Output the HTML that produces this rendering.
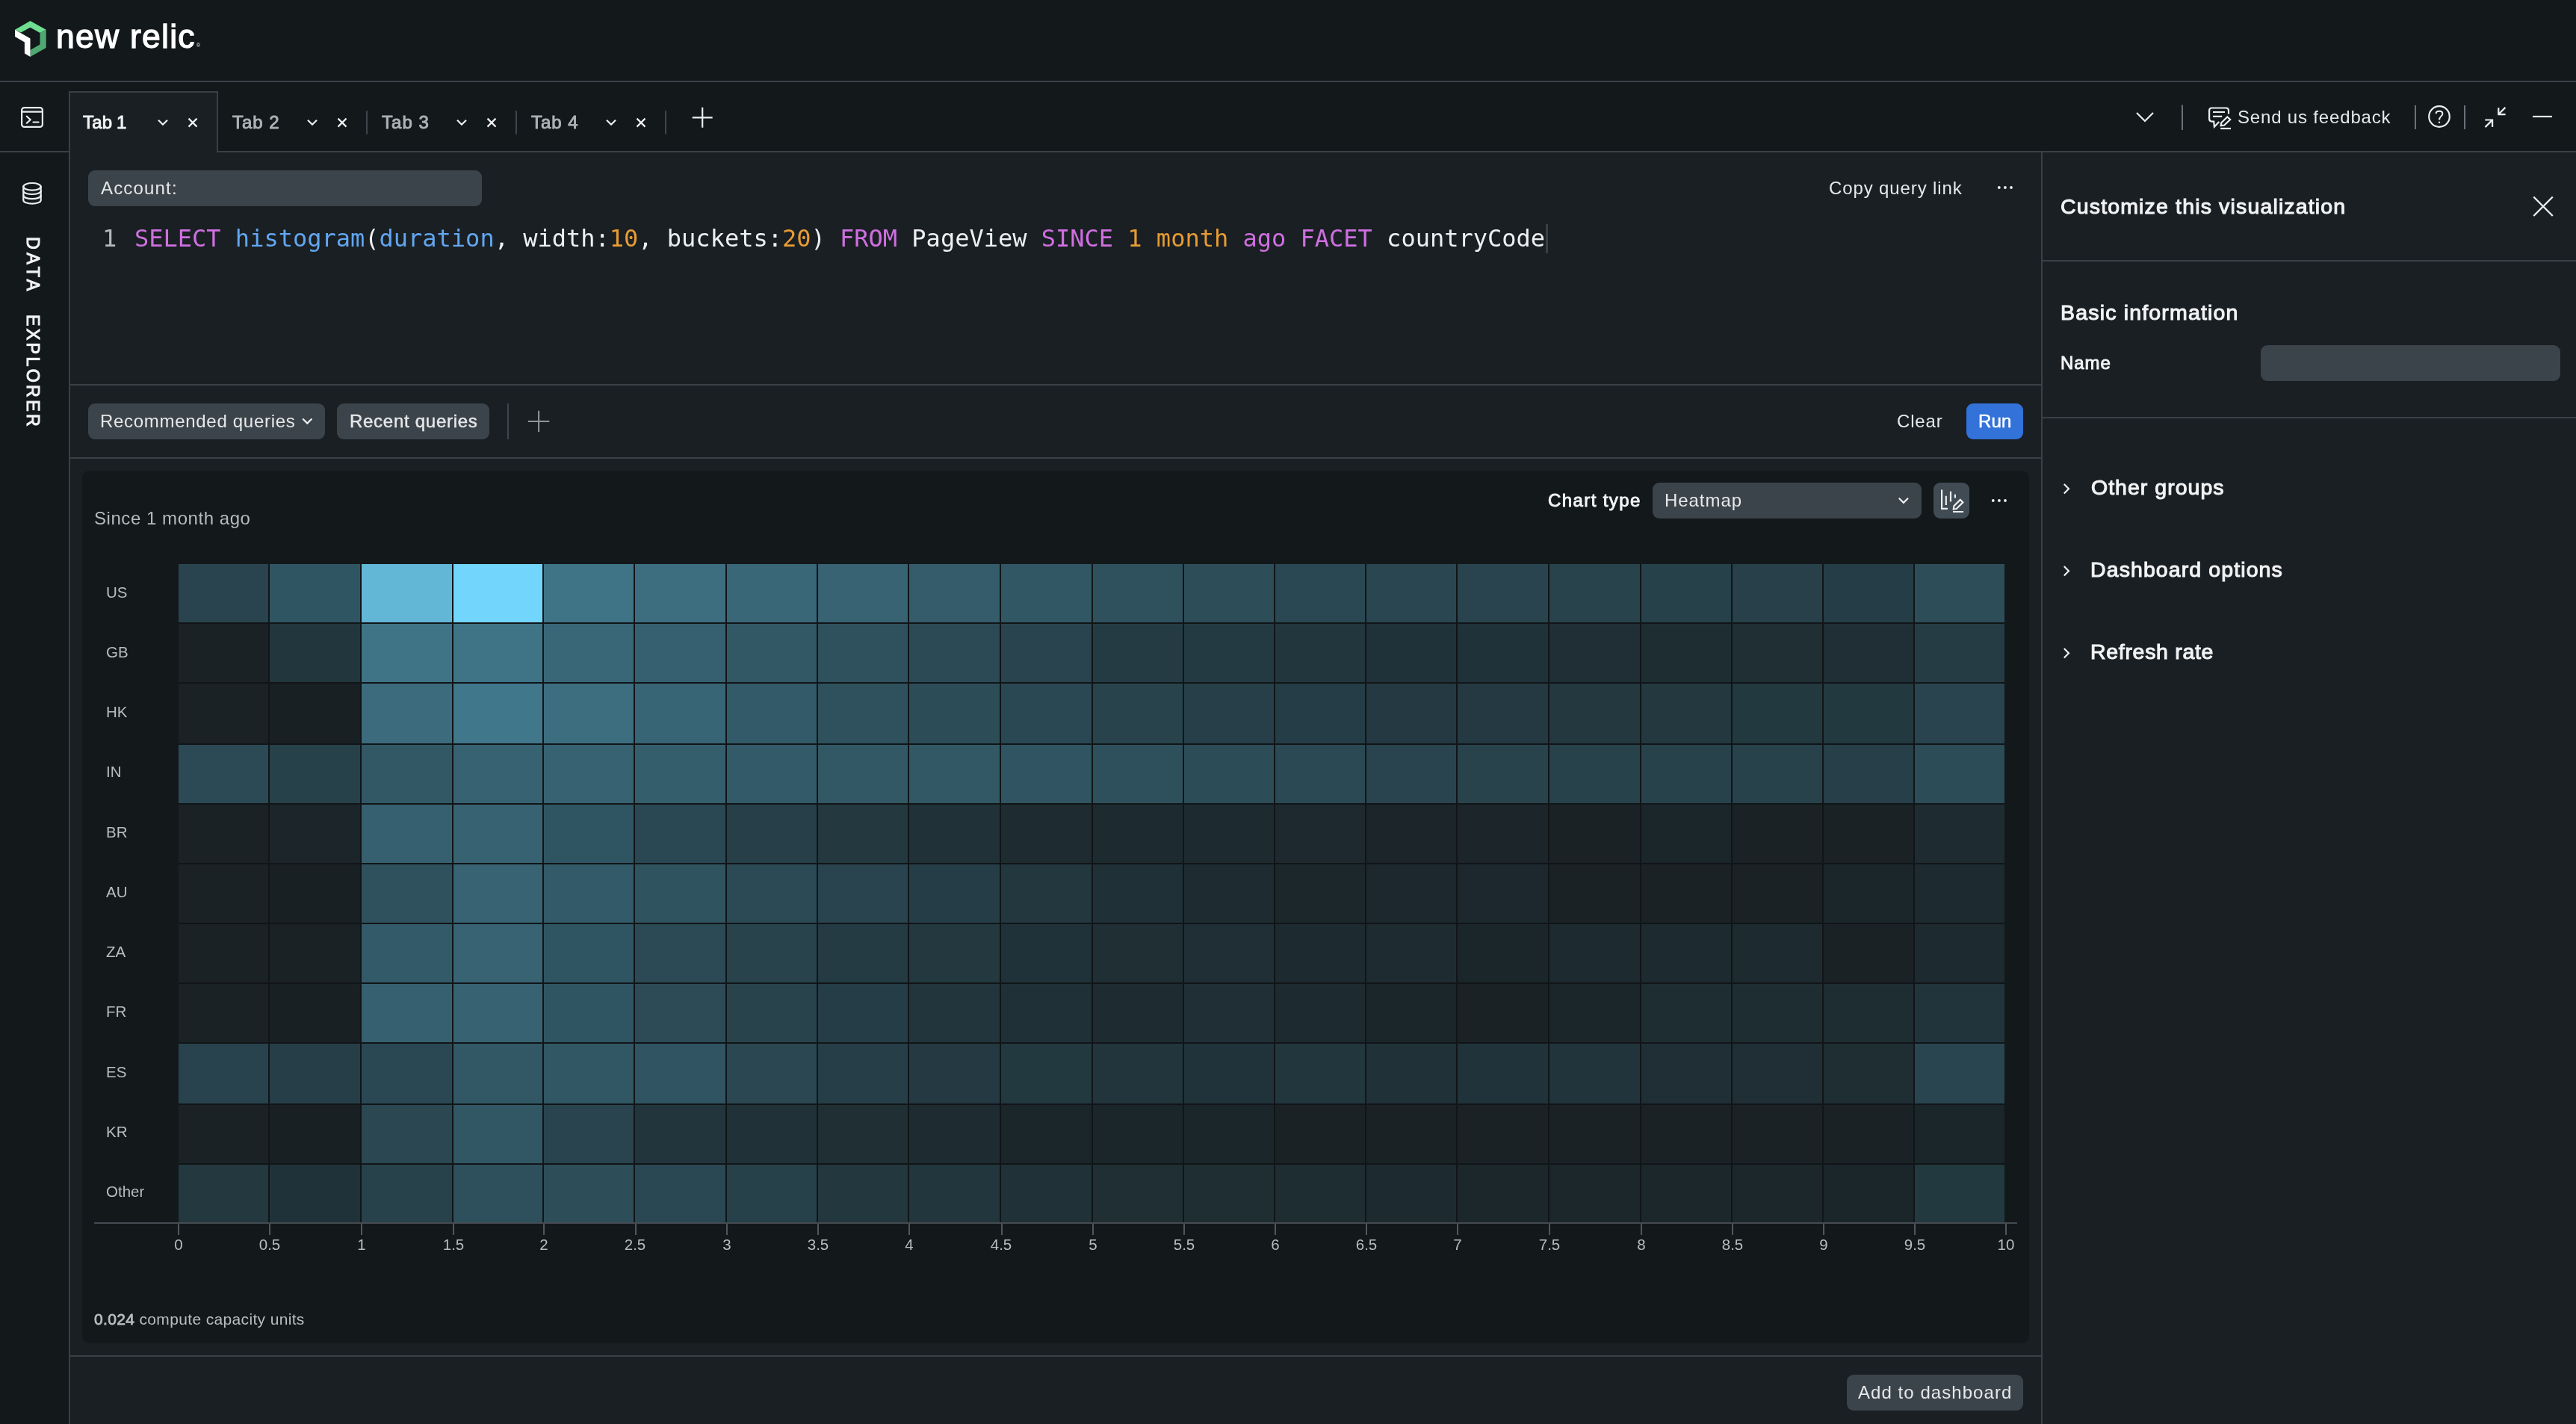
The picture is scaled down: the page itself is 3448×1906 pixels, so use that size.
<!DOCTYPE html>
<html lang="en"><head><meta charset="utf-8"><title>New Relic - Query your data</title>
<style>
*{box-sizing:border-box;margin:0;padding:0}
html,body{width:3448px;height:1906px;overflow:hidden;background:#1a1f23}
body{position:relative;font-family:"Liberation Sans",sans-serif;color:#e6e8e9;font-size:24px}
.a{position:absolute}
.t,.yl,.xl{will-change:transform}
.t{position:absolute;white-space:nowrap;line-height:40px;height:40px;font-size:24px}
.hl{position:absolute;height:2px;background:#394046}
.vl{position:absolute;width:2px;background:#394046}
.box{position:absolute;height:48px;border-radius:9px;background:#3c444b}
.mono{font-family:"DejaVu Sans Mono","Liberation Mono",monospace}
svg{position:absolute;overflow:visible}
.ic{fill:none;stroke:#eceeef;stroke-width:2.2;stroke-linecap:butt;stroke-linejoin:miter}
.rc{stroke-linecap:round;stroke-linejoin:round}
.yl{position:absolute;left:142.4px;font-size:20.5px;line-height:32px;height:32px;color:#b9bdbf;white-space:nowrap}
.xl{position:absolute;top:1650px;width:80px;text-align:center;font-size:20.5px;line-height:32px;color:#b9bdbf}
.tick{position:absolute;top:1638px;width:2px;height:15px;background:#50565c}
.kw{color:#cf6fe1}.fn{color:#62a6f0}.nm{color:#e69c33}
.tab{color:#aeb3b7;-webkit-text-stroke:0.9px}
.h{font-size:28.5px;-webkit-text-stroke:1.05px;color:#f2f3f4}
</style></head><body>

<!-- top header -->
<div class="a" style="left:0;top:0;width:3448px;height:108px;background:#13181b"></div>
<div class="hl" style="left:0;top:108px;width:3448px"></div>
<svg style="left:0;top:0" width="80" height="100" viewBox="0 0 80 100">
  <path d="M40.5 28 L61.7 39.8 L53.5 43.9 L40.5 36.8 L28 43.6 L20 39.8 Z" fill="#6fde93"/>
  <path d="M61.700 39.800 L61.700 63.900 L40.500 75.900 L40.500 66.900 L53.500 59.600 L53.500 43.900 Z" fill="#4fa871"/>
  <path d="M20 39.800 L40.500 51.600 L40.500 75.900 L32.900 71.600 L32.900 56.500 L20 49 Z" fill="#ffffff"/>
</svg>
<div class="t" id="brand" style="top:21px;font-size:44.5px;line-height:56px;height:56px;color:#fff;-webkit-text-stroke:1.3px #fff;left:75.40px;letter-spacing:1.250px">new relic</div>
<div class="t" id="reg" style="left:262.5px;top:56px;font-size:7px;line-height:10px;height:10px;color:#e6e8e9">®</div>

<!-- tab bar -->
<div class="a" style="left:0;top:110px;width:3448px;height:93px;background:#13181b"></div>
<div class="hl" style="left:0;top:202px;width:3448px"></div>
<!-- sidebar -->
<div class="a" style="left:0;top:204px;width:93px;height:1702px;background:#13181b"></div>
<div class="vl" style="left:92px;top:204px;height:1702px"></div>
<!-- active tab -->
<div class="a" style="left:92px;top:122px;width:200px;height:82px;background:#1a1f23;border:2px solid #394046;border-bottom:none"></div>

<svg style="left:0;top:0" width="93" height="300" viewBox="0 0 93 300">
 <g class="ic rc">
  <rect x="29.100" y="144.100" width="27.800" height="25.800" rx="3.500"/><path d="M29.100 149.700 H56.900"/><path d="M35.800 155.700 L40.800 160.200 L35.800 164.700 M44.500 163.500 H51.600"/>
  <ellipse cx="43" cy="249.800" rx="11.700" ry="4.800"/>
  <path d="M31.300 249.800 V267.900 C31.300 270.600 36.500 272.700 43 272.700 C49.500 272.700 54.700 270.600 54.700 267.900 V249.800"/>
  <path d="M31.300 255.400 C31.300 258 36.500 260 43 260 C49.500 260 54.700 258 54.700 255.400 M31.300 261.600 C31.300 264.200 36.500 266.200 43 266.200 C49.500 266.200 54.700 264.200 54.700 261.600"/>
 </g>
</svg>

<div class="t tab" id="tab1" style="top:144.2px;color:#f2f3f4;left:110.6px;word-spacing:-1.2px;letter-spacing:0.2px">Tab 1</div>
<div class="t tab" id="tab2" style="top:144.2px;left:311.00px;letter-spacing:1.000px">Tab 2</div>
<div class="t tab" id="tab3" style="top:144.2px;left:511.00px;letter-spacing:1.050px">Tab 3</div>
<div class="t tab" id="tab4" style="top:144.2px;left:711.00px;letter-spacing:1.000px">Tab 4</div>
<svg style="left:0;top:0" width="1000" height="204" viewBox="0 0 1000 204">
 <g class="ic" stroke-width="2.100">
  <path d="M212 160.800 L218 166.800 L224 160.800 M252.500 158.600 L263.500 169.600 M263.500 158.600 L252.500 169.600"/>
  <path d="M412 160.800 L418 166.800 L424 160.800 M452.500 158.600 L463.500 169.600 M463.500 158.600 L452.500 169.600"/>
  <path d="M612 160.800 L618 166.800 L624 160.800 M652.500 158.600 L663.500 169.600 M663.500 158.600 L652.500 169.600"/>
  <path d="M812 160.800 L818 166.800 L824 160.800 M852.500 158.600 L863.500 169.600 M863.500 158.600 L852.500 169.600"/>
  <path d="M926.700 157.300 H953.700 M940.200 143.800 V170.800" stroke-width="2.200"/>
 </g>
 <g stroke="#3f454c" stroke-width="2"><path d="M491 148.300 V179.700 M691 148.300 V179.700 M891 148.300 V179.700"/></g>
</svg>

<!-- tab bar right -->
<svg style="left:2840px;top:109px" width="608" height="94" viewBox="2840 109 608 94">
 <g class="ic">
  <path d="M2860 151 L2871 162 L2882 151"/>
  <path d="M3390 156 H3416"/>
  <circle cx="3265" cy="156" r="13.800"/>
  <path d="M3260.600 152.200 C3260.600 147.600 3269.400 147.600 3269.400 152.200 C3269.400 155.500 3265 155.500 3265 160.600" stroke-width="2"/>
  <path d="M3265 162.700 V165" stroke-width="2.200"/>
  <path d="M3353.400 143.900 L3344.300 153 M3344.300 144.200 V153.100 H3353.600 M3326.500 170.100 L3336 160.600 M3326.300 160.500 H3336.100 V170"/>
  <path d="M2983 152.600 V148 C2983 146 2981.500 144.500 2979.500 144.500 H2960.600 C2958.600 144.500 2957.100 146 2957.100 148 V159.100 C2957.100 161.100 2958.600 162.600 2960.600 162.600 H2963.200 L2963.900 169.800 L2970.300 163"/>
  <path d="M2962 150 H2978 M2962 155.900 H2974.200"/>
  <path d="M2973.300 164.300 L2981.300 156.400 L2985.200 160 L2977.300 167.500 L2972.600 168.200 Z"/>
  <path d="M2972.200 172 H2986"/>
 </g>
 <g stroke="#6b7177" stroke-width="2"><path d="M2921 140.500 V174 M3233 141 V173 M3299 141 V173"/></g>
</svg>
<div class="t" id="fb" style="top:136.8px;left:2994.60px;letter-spacing:0.828px">Send us feedback</div>

<!-- sidebar content -->
<div class="t" id="dex1" style="left:43.8px;top:316px;font-size:23.2px;-webkit-text-stroke:1.05px;transform-origin:0 0;transform:rotate(90deg) translateY(-50%);line-height:30px;height:30px;color:#f2f3f4;top:316.70px;letter-spacing:4.601px">DATA</div>
<div class="t" id="dex2" style="left:43.8px;top:421px;font-size:23.2px;-webkit-text-stroke:1.05px;transform-origin:0 0;transform:rotate(90deg) translateY(-50%);line-height:30px;height:30px;color:#f2f3f4;top:420.90px;letter-spacing:3.344px">EXPLORER</div>

<!-- query editor -->
<div class="box" style="left:118px;top:228px;width:527px"></div>
<div class="t" id="acct" style="top:232px;left:135.20px;letter-spacing:1.170px">Account:</div>
<div class="t" id="cql" style="top:232px;left:2448.30px;letter-spacing:0.884px">Copy query link</div>
<svg style="left:2668px;top:221px" width="40" height="60" viewBox="2660 640 40 60"><g fill="#eceeef"><circle cx="2667.800" cy="670" r="1.900"/><circle cx="2675.900" cy="670" r="1.900"/><circle cx="2684" cy="670" r="1.900"/></g></svg>

<div class="t mono" style="left:137px;top:299px;font-size:32px;color:#b4b8ba">1</div>
<div class="t mono" id="q" style="left:180px;top:299px;font-size:32px;color:#eeeff0"><span class="kw">SELECT</span> <span class="fn">histogram</span>(<span class="fn">duration</span>, width:<span class="nm">10</span>, buckets:<span class="nm">20</span>) <span class="kw">FROM</span> PageView <span class="kw">SINCE</span> <span class="nm">1 month</span> <span class="kw">ago</span> <span class="kw">FACET</span> countryCode</div>
<div class="a" style="left:2069px;top:300px;width:3px;height:39px;background:#3a3f44"></div>

<div class="hl" style="left:94px;top:514px;width:2638px"></div>
<div class="box" style="left:118px;top:540px;width:317px"></div>
<div class="t" id="rq" style="top:544px;left:134.00px;letter-spacing:0.699px">Recommended queries</div>
<svg style="left:402px;top:558px" width="18" height="12"><path class="ic" d="M3.200 2.500 L9.300 8.600 L15.400 2.500"/></svg>
<div class="box" style="left:451px;top:540px;width:204px"></div>
<div class="t" id="rc" style="top:544px;-webkit-text-stroke:0.45px;left:468.30px;letter-spacing:0.722px">Recent queries</div>
<div class="vl" style="left:679px;top:540px;height:48px;background:#3f454c"></div>
<svg style="left:706px;top:549px" width="30" height="30"><path d="M1 15 H29.300 M15.100 0.700 V29" stroke="#92979c" stroke-width="2" fill="none"/></svg>
<div class="t" id="clr" style="top:544px;left:2538.50px;letter-spacing:0.850px">Clear</div>
<div class="box" style="left:2632px;top:540px;width:76px;background:#3272d9"></div>
<div class="t" id="run" style="top:544px;color:#fff;-webkit-text-stroke:0.5px;left:2648.00px;letter-spacing:0.150px">Run</div>
<div class="hl" style="left:94px;top:612px;width:2638px"></div>

<!-- chart card -->
<div class="a" style="left:110px;top:630px;width:2606px;height:1168px;border-radius:10px;background:#13181b"></div>
<div class="t" id="since" style="top:674px;color:#b6babd;left:126.10px;letter-spacing:0.549px">Since 1 month ago</div>
<div class="t" id="ct" style="top:650px;-webkit-text-stroke:0.9px;color:#f2f3f4;left:2072.40px;letter-spacing:1.402px">Chart type</div>
<div class="box" style="left:2212px;top:646px;width:360px"></div>
<div class="t" id="hm" style="top:650px;left:2227.80px;letter-spacing:0.949px">Heatmap</div>
<svg style="left:2538px;top:662px" width="20" height="16" viewBox="2538 662 20 16"><path class="ic" d="M2541.800 666.800 L2547.900 672.900 L2554 666.800"/></svg>
<div class="box" style="left:2588px;top:646px;width:48px;background:#414b53"></div>
<svg style="left:2588px;top:646px" width="48" height="48" viewBox="2588 646 48 48"><g class="ic"><path d="M2599.100 655.600 V680.800 H2607"/><path d="M2604.800 663.700 V676.100 M2611 657.800 V671.500 M2616.900 661.800 V666.400"/><path d="M2615.400 677.300 L2623.800 668.900 L2627.400 672.400 L2618.700 681 L2614.800 681.400 Z M2614 685 H2628.100"/></g></svg>

<svg style="left:2660px;top:640px" width="40" height="60" viewBox="2660 640 40 60"><g fill="#eceeef"><circle cx="2667.800" cy="670" r="1.900"/><circle cx="2675.900" cy="670" r="1.900"/><circle cx="2684" cy="670" r="1.900"/></g></svg>
<svg style="left:0;top:0" width="2733" height="1700" viewBox="0 0 2733 1700">
<rect x="239" y="755" width="2444" height="881" fill="#111518"/>
<rect x="239" y="755" width="120" height="78" fill="#29444e"/>
<rect x="361" y="755" width="121" height="78" fill="#305562"/>
<rect x="484" y="755" width="121" height="78" fill="#62b7d7"/>
<rect x="607" y="755" width="119" height="78" fill="#72d6fc"/>
<rect x="728" y="755" width="120" height="78" fill="#3f7487"/>
<rect x="850" y="755" width="121" height="78" fill="#3d6e80"/>
<rect x="973" y="755" width="120" height="78" fill="#396778"/>
<rect x="1095" y="755" width="120" height="78" fill="#376373"/>
<rect x="1217" y="755" width="121" height="78" fill="#345c6b"/>
<rect x="1340" y="755" width="121" height="78" fill="#315764"/>
<rect x="1463" y="755" width="120" height="78" fill="#2f515e"/>
<rect x="1585" y="755" width="120" height="78" fill="#2d4e59"/>
<rect x="1707" y="755" width="120" height="78" fill="#2a4853"/>
<rect x="1829" y="755" width="120" height="78" fill="#294651"/>
<rect x="1951" y="755" width="121" height="78" fill="#29444e"/>
<rect x="2074" y="755" width="121" height="78" fill="#28434c"/>
<rect x="2197" y="755" width="120" height="78" fill="#27414a"/>
<rect x="2319" y="755" width="120" height="78" fill="#274049"/>
<rect x="2441" y="755" width="120" height="78" fill="#253d46"/>
<rect x="2563" y="755" width="120" height="78" fill="#2d4e59"/>
<rect x="239" y="835" width="120" height="78" fill="#1a2225"/>
<rect x="361" y="835" width="121" height="78" fill="#22363d"/>
<rect x="484" y="835" width="121" height="78" fill="#3f7487"/>
<rect x="607" y="835" width="119" height="78" fill="#3f7487"/>
<rect x="728" y="835" width="120" height="78" fill="#396778"/>
<rect x="850" y="835" width="121" height="78" fill="#36606f"/>
<rect x="973" y="835" width="120" height="78" fill="#325866"/>
<rect x="1095" y="835" width="120" height="78" fill="#2f515e"/>
<rect x="1217" y="835" width="121" height="78" fill="#2b4a55"/>
<rect x="1340" y="835" width="121" height="78" fill="#29444e"/>
<rect x="1463" y="835" width="120" height="78" fill="#243b44"/>
<rect x="1585" y="835" width="120" height="78" fill="#243a42"/>
<rect x="1707" y="835" width="120" height="78" fill="#22363d"/>
<rect x="1829" y="835" width="120" height="78" fill="#203239"/>
<rect x="1951" y="835" width="121" height="78" fill="#203239"/>
<rect x="2074" y="835" width="121" height="78" fill="#1f2f35"/>
<rect x="2197" y="835" width="120" height="78" fill="#1e2d32"/>
<rect x="2319" y="835" width="120" height="78" fill="#1f2f34"/>
<rect x="2441" y="835" width="120" height="78" fill="#1f2f35"/>
<rect x="2563" y="835" width="120" height="78" fill="#253c45"/>
<rect x="239" y="915" width="120" height="80" fill="#1a2225"/>
<rect x="361" y="915" width="121" height="80" fill="#192023"/>
<rect x="484" y="915" width="121" height="80" fill="#3b6b7c"/>
<rect x="607" y="915" width="119" height="80" fill="#41778b"/>
<rect x="728" y="915" width="120" height="80" fill="#3d6e80"/>
<rect x="850" y="915" width="121" height="80" fill="#386575"/>
<rect x="973" y="915" width="120" height="80" fill="#335a68"/>
<rect x="1095" y="915" width="120" height="80" fill="#2f515e"/>
<rect x="1217" y="915" width="121" height="80" fill="#2c4d58"/>
<rect x="1340" y="915" width="121" height="80" fill="#2a4853"/>
<rect x="1463" y="915" width="120" height="80" fill="#28434c"/>
<rect x="1585" y="915" width="120" height="80" fill="#263f48"/>
<rect x="1707" y="915" width="120" height="80" fill="#253d46"/>
<rect x="1829" y="915" width="120" height="80" fill="#243941"/>
<rect x="1951" y="915" width="121" height="80" fill="#243941"/>
<rect x="2074" y="915" width="121" height="80" fill="#23383f"/>
<rect x="2197" y="915" width="120" height="80" fill="#23383f"/>
<rect x="2319" y="915" width="120" height="80" fill="#233940"/>
<rect x="2441" y="915" width="120" height="80" fill="#233940"/>
<rect x="2563" y="915" width="120" height="80" fill="#29444e"/>
<rect x="239" y="997" width="120" height="78" fill="#2b4a55"/>
<rect x="361" y="997" width="121" height="78" fill="#27414a"/>
<rect x="484" y="997" width="121" height="78" fill="#325866"/>
<rect x="607" y="997" width="119" height="78" fill="#376271"/>
<rect x="728" y="997" width="120" height="78" fill="#376271"/>
<rect x="850" y="997" width="121" height="78" fill="#355e6d"/>
<rect x="973" y="997" width="120" height="78" fill="#335a68"/>
<rect x="1095" y="997" width="120" height="78" fill="#325866"/>
<rect x="1217" y="997" width="121" height="78" fill="#325866"/>
<rect x="1340" y="997" width="121" height="78" fill="#305461"/>
<rect x="1463" y="997" width="120" height="78" fill="#2e505d"/>
<rect x="1585" y="997" width="120" height="78" fill="#2c4c57"/>
<rect x="1707" y="997" width="120" height="78" fill="#2b4954"/>
<rect x="1829" y="997" width="120" height="78" fill="#29444e"/>
<rect x="1951" y="997" width="121" height="78" fill="#28434c"/>
<rect x="2074" y="997" width="121" height="78" fill="#27424b"/>
<rect x="2197" y="997" width="120" height="78" fill="#27424b"/>
<rect x="2319" y="997" width="120" height="78" fill="#27424b"/>
<rect x="2441" y="997" width="120" height="78" fill="#263f48"/>
<rect x="2563" y="997" width="120" height="78" fill="#2c4c57"/>
<rect x="239" y="1077" width="120" height="78" fill="#1a2225"/>
<rect x="361" y="1077" width="121" height="78" fill="#1b252a"/>
<rect x="484" y="1077" width="121" height="78" fill="#36606f"/>
<rect x="607" y="1077" width="119" height="78" fill="#376271"/>
<rect x="728" y="1077" width="120" height="78" fill="#305562"/>
<rect x="850" y="1077" width="121" height="78" fill="#2a4853"/>
<rect x="973" y="1077" width="120" height="78" fill="#263f48"/>
<rect x="1095" y="1077" width="120" height="78" fill="#23383f"/>
<rect x="1217" y="1077" width="121" height="78" fill="#203138"/>
<rect x="1340" y="1077" width="121" height="78" fill="#1e2c31"/>
<rect x="1463" y="1077" width="120" height="78" fill="#1d2b30"/>
<rect x="1585" y="1077" width="120" height="78" fill="#1d2b30"/>
<rect x="1707" y="1077" width="120" height="78" fill="#1d292e"/>
<rect x="1829" y="1077" width="120" height="78" fill="#1b252a"/>
<rect x="1951" y="1077" width="121" height="78" fill="#1b252a"/>
<rect x="2074" y="1077" width="121" height="78" fill="#1a2225"/>
<rect x="2197" y="1077" width="120" height="78" fill="#1b262b"/>
<rect x="2319" y="1077" width="120" height="78" fill="#1a2225"/>
<rect x="2441" y="1077" width="120" height="78" fill="#1a2225"/>
<rect x="2563" y="1077" width="120" height="78" fill="#1e2c31"/>
<rect x="239" y="1157" width="120" height="78" fill="#1a2225"/>
<rect x="361" y="1157" width="121" height="78" fill="#192023"/>
<rect x="484" y="1157" width="121" height="78" fill="#2f515e"/>
<rect x="607" y="1157" width="119" height="78" fill="#376373"/>
<rect x="728" y="1157" width="120" height="78" fill="#335a68"/>
<rect x="850" y="1157" width="121" height="78" fill="#305360"/>
<rect x="973" y="1157" width="120" height="78" fill="#2b4a55"/>
<rect x="1095" y="1157" width="120" height="78" fill="#29444e"/>
<rect x="1217" y="1157" width="121" height="78" fill="#253d46"/>
<rect x="1340" y="1157" width="121" height="78" fill="#22373e"/>
<rect x="1463" y="1157" width="120" height="78" fill="#203037"/>
<rect x="1585" y="1157" width="120" height="78" fill="#1e2c31"/>
<rect x="1707" y="1157" width="120" height="78" fill="#1c272c"/>
<rect x="1829" y="1157" width="120" height="78" fill="#1c282d"/>
<rect x="1951" y="1157" width="121" height="78" fill="#1c282d"/>
<rect x="2074" y="1157" width="121" height="78" fill="#1a2225"/>
<rect x="2197" y="1157" width="120" height="78" fill="#1a2225"/>
<rect x="2319" y="1157" width="120" height="78" fill="#1a2225"/>
<rect x="2441" y="1157" width="120" height="78" fill="#1b262b"/>
<rect x="2563" y="1157" width="120" height="78" fill="#1d2a2f"/>
<rect x="239" y="1237" width="120" height="78" fill="#1a2225"/>
<rect x="361" y="1237" width="121" height="78" fill="#1a2225"/>
<rect x="484" y="1237" width="121" height="78" fill="#335a68"/>
<rect x="607" y="1237" width="119" height="78" fill="#376373"/>
<rect x="728" y="1237" width="120" height="78" fill="#305562"/>
<rect x="850" y="1237" width="121" height="78" fill="#2b4a55"/>
<rect x="973" y="1237" width="120" height="78" fill="#28434c"/>
<rect x="1095" y="1237" width="120" height="78" fill="#243b44"/>
<rect x="1217" y="1237" width="121" height="78" fill="#23383f"/>
<rect x="1340" y="1237" width="121" height="78" fill="#203239"/>
<rect x="1463" y="1237" width="120" height="78" fill="#1f2f34"/>
<rect x="1585" y="1237" width="120" height="78" fill="#1f2f35"/>
<rect x="1707" y="1237" width="120" height="78" fill="#1d2b30"/>
<rect x="1829" y="1237" width="120" height="78" fill="#1e2c31"/>
<rect x="1951" y="1237" width="121" height="78" fill="#1b262b"/>
<rect x="2074" y="1237" width="121" height="78" fill="#1d2a2f"/>
<rect x="2197" y="1237" width="120" height="78" fill="#1d2b30"/>
<rect x="2319" y="1237" width="120" height="78" fill="#1d2b30"/>
<rect x="2441" y="1237" width="120" height="78" fill="#1a2225"/>
<rect x="2563" y="1237" width="120" height="78" fill="#1d2b30"/>
<rect x="239" y="1317" width="120" height="78" fill="#1a2225"/>
<rect x="361" y="1317" width="121" height="78" fill="#192023"/>
<rect x="484" y="1317" width="121" height="78" fill="#36606f"/>
<rect x="607" y="1317" width="119" height="78" fill="#376272"/>
<rect x="728" y="1317" width="120" height="78" fill="#305562"/>
<rect x="850" y="1317" width="121" height="78" fill="#2c4b56"/>
<rect x="973" y="1317" width="120" height="78" fill="#28434c"/>
<rect x="1095" y="1317" width="120" height="78" fill="#253d46"/>
<rect x="1217" y="1317" width="121" height="78" fill="#22353c"/>
<rect x="1340" y="1317" width="121" height="78" fill="#203037"/>
<rect x="1463" y="1317" width="120" height="78" fill="#1e2c31"/>
<rect x="1585" y="1317" width="120" height="78" fill="#1f2f35"/>
<rect x="1707" y="1317" width="120" height="78" fill="#1d2b30"/>
<rect x="1829" y="1317" width="120" height="78" fill="#1b262b"/>
<rect x="1951" y="1317" width="121" height="78" fill="#1a2225"/>
<rect x="2074" y="1317" width="121" height="78" fill="#1b262b"/>
<rect x="2197" y="1317" width="120" height="78" fill="#1e2d32"/>
<rect x="2319" y="1317" width="120" height="78" fill="#1e2d32"/>
<rect x="2441" y="1317" width="120" height="78" fill="#1e2d32"/>
<rect x="2563" y="1317" width="120" height="78" fill="#21343b"/>
<rect x="239" y="1397" width="120" height="80" fill="#28434d"/>
<rect x="361" y="1397" width="121" height="80" fill="#263e47"/>
<rect x="484" y="1397" width="121" height="80" fill="#2a4853"/>
<rect x="607" y="1397" width="119" height="80" fill="#325866"/>
<rect x="728" y="1397" width="120" height="80" fill="#315764"/>
<rect x="850" y="1397" width="121" height="80" fill="#305461"/>
<rect x="973" y="1397" width="120" height="80" fill="#2a4752"/>
<rect x="1095" y="1397" width="120" height="80" fill="#263e47"/>
<rect x="1217" y="1397" width="121" height="80" fill="#243941"/>
<rect x="1340" y="1397" width="121" height="80" fill="#233940"/>
<rect x="1463" y="1397" width="120" height="80" fill="#22353c"/>
<rect x="1585" y="1397" width="120" height="80" fill="#21333a"/>
<rect x="1707" y="1397" width="120" height="80" fill="#22363d"/>
<rect x="1829" y="1397" width="120" height="80" fill="#203138"/>
<rect x="1951" y="1397" width="121" height="80" fill="#21333a"/>
<rect x="2074" y="1397" width="121" height="80" fill="#21343b"/>
<rect x="2197" y="1397" width="120" height="80" fill="#1f2f35"/>
<rect x="2319" y="1397" width="120" height="80" fill="#1f2f35"/>
<rect x="2441" y="1397" width="120" height="80" fill="#1e2e33"/>
<rect x="2563" y="1397" width="120" height="80" fill="#29454f"/>
<rect x="239" y="1479" width="120" height="78" fill="#1a2225"/>
<rect x="361" y="1479" width="121" height="78" fill="#192023"/>
<rect x="484" y="1479" width="121" height="78" fill="#2a4752"/>
<rect x="607" y="1479" width="119" height="78" fill="#315764"/>
<rect x="728" y="1479" width="120" height="78" fill="#29444e"/>
<rect x="850" y="1479" width="121" height="78" fill="#22353c"/>
<rect x="973" y="1479" width="120" height="78" fill="#203138"/>
<rect x="1095" y="1479" width="120" height="78" fill="#1f2f34"/>
<rect x="1217" y="1479" width="121" height="78" fill="#1e2c31"/>
<rect x="1340" y="1479" width="121" height="78" fill="#1b262b"/>
<rect x="1463" y="1479" width="120" height="78" fill="#1b262b"/>
<rect x="1585" y="1479" width="120" height="78" fill="#1b262b"/>
<rect x="1707" y="1479" width="120" height="78" fill="#1a2225"/>
<rect x="1829" y="1479" width="120" height="78" fill="#1a2225"/>
<rect x="1951" y="1479" width="121" height="78" fill="#1a2225"/>
<rect x="2074" y="1479" width="121" height="78" fill="#1a2225"/>
<rect x="2197" y="1479" width="120" height="78" fill="#1a2225"/>
<rect x="2319" y="1479" width="120" height="78" fill="#1a2225"/>
<rect x="2441" y="1479" width="120" height="78" fill="#1a2225"/>
<rect x="2563" y="1479" width="120" height="78" fill="#1b262b"/>
<rect x="239" y="1559" width="120" height="77" fill="#23383f"/>
<rect x="361" y="1559" width="121" height="77" fill="#203239"/>
<rect x="484" y="1559" width="121" height="77" fill="#27424b"/>
<rect x="607" y="1559" width="119" height="77" fill="#2e505d"/>
<rect x="728" y="1559" width="120" height="77" fill="#2d4e59"/>
<rect x="850" y="1559" width="121" height="77" fill="#2a4853"/>
<rect x="973" y="1559" width="120" height="77" fill="#27414a"/>
<rect x="1095" y="1559" width="120" height="77" fill="#22373e"/>
<rect x="1217" y="1559" width="121" height="77" fill="#22363d"/>
<rect x="1340" y="1559" width="121" height="77" fill="#203138"/>
<rect x="1463" y="1559" width="120" height="77" fill="#1f2f34"/>
<rect x="1585" y="1559" width="120" height="77" fill="#1e2e33"/>
<rect x="1707" y="1559" width="120" height="77" fill="#1e2d32"/>
<rect x="1829" y="1559" width="120" height="77" fill="#1d2b30"/>
<rect x="1951" y="1559" width="121" height="77" fill="#1c272c"/>
<rect x="2074" y="1559" width="121" height="77" fill="#1c272c"/>
<rect x="2197" y="1559" width="120" height="77" fill="#1c272c"/>
<rect x="2319" y="1559" width="120" height="77" fill="#1c272c"/>
<rect x="2441" y="1559" width="120" height="77" fill="#1b262b"/>
<rect x="2563" y="1559" width="120" height="77" fill="#233940"/>
</svg>
<div class="yl" id="yl0" style="top:776.7px">US</div>
<div class="yl" id="yl1" style="top:856.9px">GB</div>
<div class="yl" id="yl2" style="top:937.2px">HK</div>
<div class="yl" id="yl3" style="top:1017.4px">IN</div>
<div class="yl" id="yl4" style="top:1097.7px">BR</div>
<div class="yl" id="yl5" style="top:1177.9px">AU</div>
<div class="yl" id="yl6" style="top:1258.1px">ZA</div>
<div class="yl" id="yl7" style="top:1338.4px">FR</div>
<div class="yl" id="yl8" style="top:1418.6px">ES</div>
<div class="yl" id="yl9" style="top:1498.9px">KR</div>
<div class="yl" id="yl10" style="top:1579.1px">Other</div>
<div class="a" style="left:126px;top:1636px;width:2574px;height:2px;background:#454b51"></div>
<div class="tick" style="left:238px"></div>
<div class="tick" style="left:360px"></div>
<div class="tick" style="left:483px"></div>
<div class="tick" style="left:606px"></div>
<div class="tick" style="left:727px"></div>
<div class="tick" style="left:850px"></div>
<div class="tick" style="left:972px"></div>
<div class="tick" style="left:1094px"></div>
<div class="tick" style="left:1216px"></div>
<div class="tick" style="left:1340px"></div>
<div class="tick" style="left:1462px"></div>
<div class="tick" style="left:1584px"></div>
<div class="tick" style="left:1706px"></div>
<div class="tick" style="left:1828px"></div>
<div class="tick" style="left:1950px"></div>
<div class="tick" style="left:2073px"></div>
<div class="tick" style="left:2196px"></div>
<div class="tick" style="left:2318px"></div>
<div class="tick" style="left:2440px"></div>
<div class="tick" style="left:2562px"></div>
<div class="tick" style="left:2684px"></div>
<div class="xl" style="left:199px">0</div>
<div class="xl" style="left:321px">0.5</div>
<div class="xl" style="left:444px">1</div>
<div class="xl" style="left:567px">1.5</div>
<div class="xl" style="left:688px">2</div>
<div class="xl" style="left:810px">2.5</div>
<div class="xl" style="left:933px">3</div>
<div class="xl" style="left:1055px">3.5</div>
<div class="xl" style="left:1177px">4</div>
<div class="xl" style="left:1300px">4.5</div>
<div class="xl" style="left:1423px">5</div>
<div class="xl" style="left:1545px">5.5</div>
<div class="xl" style="left:1667px">6</div>
<div class="xl" style="left:1789px">6.5</div>
<div class="xl" style="left:1911px">7</div>
<div class="xl" style="left:2034px">7.5</div>
<div class="xl" style="left:2157px">8</div>
<div class="xl" style="left:2279px">8.5</div>
<div class="xl" style="left:2401px">9</div>
<div class="xl" style="left:2523px">9.5</div>
<div class="xl" style="left:2645px">10</div>
<div class="t" id="ccu" style="top:1746px;font-size:21px;color:#b9bdbf;left:126.40px;letter-spacing:0.347px"><b style="font-weight:normal;-webkit-text-stroke:0.8px">0.024</b> compute capacity units</div>

<div class="hl" style="left:94px;top:1814px;width:2638px"></div>
<div class="box" style="left:2472px;top:1840px;width:236px"></div>
<div class="t" id="atd" style="top:1844px;left:2486.80px;letter-spacing:1.055px">Add to dashboard</div>

<!-- right panel -->
<div class="vl" style="left:2732px;top:204px;height:1702px"></div>
<div class="t h" id="cust" style="top:256px;left:2757.60px;letter-spacing:1.153px">Customize this visualization</div>
<svg style="left:3389px;top:261px" width="30" height="30"><path d="M2.300 2.500 L27.800 28 M27.800 2.500 L2.300 28" stroke="#eceeef" stroke-width="2.400" fill="none"/></svg>
<div class="hl" style="left:2734px;top:348px;width:714px"></div>
<div class="t h" id="basic" style="top:398px;left:2757.60px;letter-spacing:1.174px">Basic information</div>
<div class="t" id="name" style="top:466px;-webkit-text-stroke:0.9px;color:#f2f3f4;left:2757.60px;letter-spacing:0.935px">Name</div>
<div class="box" style="left:3026px;top:462px;width:401px"></div>
<div class="hl" style="left:2734px;top:558px;width:714px"></div>

<svg style="left:2758px;top:642px" width="16" height="24"><path class="ic" d="M4.800 6 L11 12.300 L4.800 18.600"/></svg>
<div class="t h" id="og" style="top:632px;left:2799.20px;letter-spacing:1.019px">Other groups</div>
<svg style="left:2758px;top:752px" width="16" height="24"><path class="ic" d="M4.800 6 L11 12.300 L4.800 18.600"/></svg>
<div class="t h" id="dopt" style="top:742px;left:2798.20px;letter-spacing:1.097px">Dashboard options</div>
<svg style="left:2758px;top:862px" width="16" height="24"><path class="ic" d="M4.800 6 L11 12.300 L4.800 18.600"/></svg>
<div class="t h" id="rr" style="top:852px;left:2798.20px;letter-spacing:0.693px">Refresh rate</div>

</body></html>
